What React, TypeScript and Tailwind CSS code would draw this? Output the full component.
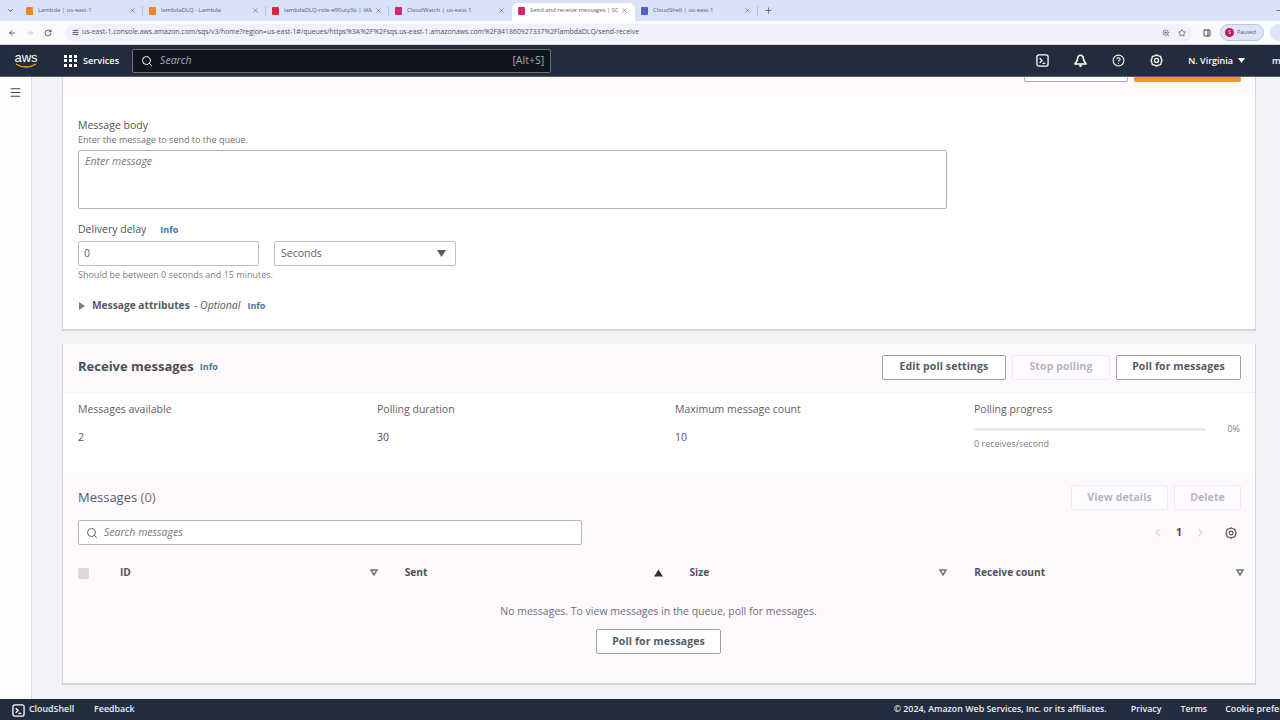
import { ArrowLeft, ArrowRight, RotateCw, Search, Star, ZoomIn, Menu, CircleHelp, ChevronLeft, ChevronRight, X, Plus, ChevronDown, Minus, PanelRight, SlidersHorizontal } from "lucide-react";

const font = "font-['Open_Sans','Liberation_Sans',sans-serif]";

function Tab({ label, color, active, sep = true }: { label: string; color: string; active?: boolean; sep?: boolean }) {
  return (
    <div className={`w-[123px] h-[18px] shrink-0 flex items-center pl-[6px] pb-[3px] rounded-t-[6px] ${active ? "bg-white" : ""}`}>
      <span className="w-[7px] h-[8px] shrink-0 rounded-[1px] mr-[5px]" style={{ backgroundColor: color }} />
      <span className="flex-1 overflow-hidden whitespace-nowrap text-[5.9px] text-[#5b6170]">{label}</span>
      <X className="w-[7px] h-[7px] ml-[3px] text-[#555b68] shrink-0" strokeWidth={2} />
      <span className={`w-[1px] h-[10px] ml-[6px] shrink-0 ${sep ? "bg-[#b9c1d6]" : ""}`} />
    </div>
  );
}

function CloudShellIcon({ size = 14, color = "#ffffff" }: { size?: number; color?: string }) {
  return (
    <svg width={size} height={size} viewBox="0 0 14 14" fill="none" stroke={color} strokeWidth="1.4" className="shrink-0">
      <rect x="1" y="1" width="12" height="12" rx="2" />
      <path d="M4 4.500 6.500 7 4 9.500M7 10h3" />
    </svg>
  );
}

function BellIcon() {
  return (
    <svg width="13" height="14" viewBox="0 0 13 14" fill="none" stroke="#fff" strokeWidth="1.6" className="block">
      <path d="M6.500 1.200c-1.800 0-2.600 1.300-2.800 3L2.900 7 1 10h11L10.100 7l-.8-2.800C9.100 2.500 8.300 1.200 6.500 1.200z" strokeLinejoin="round" />
      <circle cx="6.500" cy="11.800" r="1.300" fill="#fff" stroke="none" />
    </svg>
  );
}

function GearIcon({ color, size = 13 }: { color: string; size?: number }) {
  return (
    <svg width={size} height={size} viewBox="0 0 14 14" fill="none" stroke={color} strokeWidth="1.4" className="block">
      <path d="M7 1 9 2 11.500 2.500 12 5 13 7 12 9 11.500 11.500 9 12 7 13 5 12 2.500 11.500 2 9 1 7 2 5 2.500 2.500 5 2z" strokeLinejoin="round" />
      <circle cx="7" cy="7" r="2.200" />
    </svg>
  );
}

function Btn({ children, disabled, w }: { children: string; disabled?: boolean; w: string }) {
  return (
    <div className={`${w} h-[25px] shrink-0 flex items-center justify-center rounded-[2px] text-[10.5px] font-bold tracking-[0.1px] ${disabled ? "border border-[#eeecf1] text-[#b4b6bc] bg-[#fefcff]" : "border border-[#9ba0a8] text-[#555b66] bg-white"}`}>
      {children}
    </div>
  );
}

function Stat({ label, value, w }: { label: string; value: string; w: string }) {
  return (
    <div className={`${w} flex flex-col`}>
      <span className="text-[10.5px] leading-[14px] text-[#5b6068]">{label}</span>
      <span className="text-[10.5px] leading-[14px] text-[#4e535b] mt-[14px]">{value}</span>
    </div>
  );
}

function Caret({ up }: { up?: boolean }) {
  return up ? (
    <svg width="9" height="8" viewBox="0 0 9 8"><path d="M4.500 0.500 9 7.500H0z" fill="#2f343b" /></svg>
  ) : (
    <svg width="8" height="7" viewBox="0 0 8 7"><path d="M1 1h6L4 6z" fill="none" stroke="#6e737b" strokeWidth="1.5" /></svg>
  );
}

function Th({ label, w, up }: { label: string; w: string; up?: boolean }) {
  return (
    <div className={`${w} flex items-center justify-between`}>
      <span className="text-[10.2px] font-bold text-[#4e535b]">{label}</span>
      <Caret up={up} />
    </div>
  );
}

export default function App() {
  return (
    <div className={`w-[1280px] h-[720px] overflow-hidden flex flex-col bg-[#f3f2f7] ${font}`}>
      {/* tabs */}
      <div className="h-[21px] shrink-0 bg-[#d9e2f6] flex items-end pl-[7px]">
        <ChevronDown className="w-[7px] h-[7px] text-[#444] mb-[7px] mr-[6px]" strokeWidth={3} />
        <Tab label="Lambda | us-east-1" color="#e8862e" />
        <Tab label="lambdaDLQ - Lambda" color="#e8862e" />
        <Tab label="lambdaDLQ-role-e90uty3b | IAM" color="#d5293f" />
        <Tab label="CloudWatch | us-east-1" color="#d6246e" sep={false} />
        <Tab label="Send and receive messages | SQS" color="#d6246e" active sep={false} />
        <Tab label="CloudShell | us-east-1" color="#4f5fc4" />
        <Plus className="w-[9px] h-[9px] text-[#555] mb-[6px] ml-[6px]" strokeWidth={2} />
        <div className="flex-1" />
        <Minus className="w-[9px] h-[9px] text-[#555] mb-[6px] mr-[-4px]" strokeWidth={2} />
      </div>
      {/* toolbar */}
      <div className="h-[24px] shrink-0 bg-[#fafbfe] flex items-center pl-[8px] border-b border-[#cfd2da]">
        <ArrowLeft className="w-[8px] h-[8px] text-[#444] shrink-0" strokeWidth={2.5} />
        <ArrowRight className="w-[8px] h-[8px] text-[#bbb] ml-[10px] shrink-0" strokeWidth={2.5} />
        <RotateCw className="w-[8px] h-[8px] text-[#444] ml-[10px] shrink-0" strokeWidth={2.5} />
        <div className="ml-[13px] w-[1128px] shrink-0 h-[18px] rounded-full bg-[#f0f1fb] flex items-center pl-[7px]">
          <SlidersHorizontal className="w-[7px] h-[7px] text-[#444] mr-[3px]" strokeWidth={2.5} />
          <span className="text-[6.9px] text-[#4c5260] whitespace-nowrap flex-1">us-east-1.console.aws.amazon.com/sqs/v3/home?region=us-east-1#/queues/https%3A%2F%2Fsqs.us-east-1.amazonaws.com%2F841860927337%2FlambdaDLQ/send-receive</span>
          <ZoomIn className="w-[8px] h-[8px] text-[#555] mr-[8px]" strokeWidth={2} />
          <Star className="w-[8px] h-[8px] text-[#444] mr-[7px]" strokeWidth={2} />
        </div>
        <PanelRight className="w-[8px] h-[8px] text-[#222] ml-[10px] shrink-0" strokeWidth={2.5} />
        <div className="ml-[9px] w-[44px] h-[17px] rounded-full bg-[#dfe5f7] border border-[#b9c4e0] flex items-center pl-[4px] gap-[3px] shrink-0">
          <span className="w-[9px] h-[9px] rounded-full bg-[#c2185b] text-[5px] text-white flex items-center justify-center">S</span>
          <span className="text-[5.5px] text-[#50566a]">Paused</span>
        </div>
        <div className="ml-[6px] h-[17px] flex-1 rounded-l-full bg-[#dfe5f7]" />
      </div>
      {/* aws nav */}
      <div className="h-[32px] shrink-0 bg-[#222c3d] flex items-center border-b border-[#5a6069] overflow-hidden">
        <div className="w-[52px] flex flex-col items-center">
          <span className="text-[13px] leading-[11px] text-white font-['Liberation_Sans',sans-serif]">aws</span>
          <svg width="22" height="6" viewBox="0 0 22 6" fill="none"><path d="M1 1c6 4 14 4 20 0" stroke="#f59e0b" strokeWidth="1.4" /></svg>
        </div>
        <div className="grid grid-cols-3 gap-[1.5px] w-[13px] ml-[12px]">
          {Array.from({ length: 9 }).map((_, i) => (
            <span key={i} className="w-[3px] h-[3px] bg-white" />
          ))}
        </div>
        <span className="text-[9.2px] font-semibold text-white ml-[6px]">Services</span>
        <div className="ml-[13px] w-[419px] h-[24px] bg-[#10141c] border border-[#6a7079] rounded-[2px] flex items-center pl-[8px] pr-[6px]">
          <Search className="w-[12px] h-[12px] text-white" strokeWidth={2} />
          <span className="text-[10.5px] italic text-[#a6abb3] ml-[7px] flex-1">Search</span>
          <span className="text-[10.5px] text-[#a6abb3]">[Alt+S]</span>
        </div>
        <div className="flex-1" />
        <CloudShellIcon size={13} />
        <span className="ml-[25px]"><BellIcon /></span>
        <CircleHelp className="w-[13px] h-[13px] text-white ml-[25px]" strokeWidth={2} />
        <span className="ml-[25px]"><GearIcon color="#ffffff" /></span>
        <span className="text-[9px] font-semibold text-white ml-[25px] whitespace-nowrap">N. Virginia</span>
        <svg width="7" height="5" viewBox="0 0 7 5" className="ml-[5px]"><path d="M0 0h7L3.500 5z" fill="#fff" /></svg>
        <span className="text-[9.2px] font-semibold text-white ml-[27px] w-[8px] overflow-hidden">m</span>
      </div>
      {/* body */}
      <div className="flex-1 flex min-h-0">
        <div className="w-[32px] shrink-0 bg-[#fffdff] border-r border-[#dcdce2] pt-[9px] pl-[9px]">
          <Menu className="w-[13px] h-[13px] text-[#3e444c]" strokeWidth={2} />
        </div>
        <div className="w-[1194px] ml-[30px] shrink-0 flex flex-col">
          {/* send card */}
          <div className="h-[254px] shrink-0 bg-white border-b-2 border-x border-[#d5d5da] flex flex-col">
            <div className="h-[19px] shrink-0 bg-[#fdf9fd] flex justify-end items-start gap-[6px] pr-[14px] overflow-hidden">
              <div className="w-[104px] h-[25px] mt-[-20px] shrink-0 bg-white border border-[#a9adb4] rounded-[2px]" />
              <div className="w-[107px] h-[25px] mt-[-20px] shrink-0 bg-[#ef9c1e] rounded-[2px]" />
            </div>
            <div className="pl-[15px] pt-[22px]">
              <div className="text-[10.5px] leading-[14px] text-[#4e535b]">Message body</div>
              <div className="text-[9px] leading-[12px] mt-[2px] text-[#6b7078]">Enter the message to send to the queue.</div>
              <div className="w-[869px] h-[59px] mt-[4px] border border-[#b0b3b9] rounded-[2px] pl-[6px] pt-[3px] text-[10.5px] italic text-[#75797f]">Enter message</div>
              <div className="flex items-center h-[14px] mt-[14px]">
                <span className="text-[10.5px] text-[#4e535b]">Delivery delay</span>
                <span className="text-[9px] font-bold text-[#3f74a8] ml-[14px]">Info</span>
              </div>
              <div className="flex gap-[15px] mt-[4px]">
                <div className="w-[181px] h-[25px] border border-[#bcbfc5] rounded-[2px] flex items-center pl-[5px] text-[10.5px] text-[#5a5f67]">0</div>
                <div className="w-[182px] h-[25px] border border-[#bcbfc5] rounded-[2px] flex items-center justify-between pl-[6px] pr-[9px] text-[10.5px] text-[#5a5f67]">
                  Seconds
                  <svg width="9" height="7" viewBox="0 0 9 7"><path d="M0 0h9L4.500 7z" fill="#545b64" /></svg>
                </div>
              </div>
              <div className="text-[9px] leading-[12px] mt-[3px] text-[#7b8087]">Should be between 0 seconds and 15 minutes.</div>
              <div className="flex items-center h-[14px] mt-[18px]">
                <svg width="7" height="8" viewBox="0 0 7 8"><path d="M1 0l6 4-6 4z" fill="#7a7f87" /></svg>
                <span className="text-[10.2px] font-bold text-[#565b63] ml-[7px]">Message attributes</span>
                <span className="text-[10.5px] text-[#565b63] ml-[4px]">-</span>
                <span className="text-[10.5px] italic text-[#565b63] ml-[3px]">Optional</span>
                <span className="text-[9px] font-bold text-[#3f74a8] ml-[7px]">Info</span>
              </div>
            </div>
          </div>
          {/* receive card */}
          <div className="h-[341px] mt-[13px] shrink-0 bg-white border-b-2 border-x border-[#d5d5da] flex flex-col">
            <div className="h-[49px] shrink-0 bg-[#fdf9fd] border-b border-[#f2eff3] flex items-center pb-[2px] pl-[15px] pr-[14px]">
              <span className="text-[13px] font-bold text-[#4a4f57]">Receive messages</span>
              <span className="text-[9px] font-bold text-[#3f74a8] ml-[6px]">Info</span>
              <div className="flex-1" />
              <Btn w="w-[124px]">Edit poll settings</Btn>
              <div className="w-[6px]" />
              <Btn w="w-[98px]" disabled>Stop polling</Btn>
              <div className="w-[6px]" />
              <Btn w="w-[125px]">Poll for messages</Btn>
            </div>
            <div className="h-[80px] shrink-0 flex pl-[15px] pt-[9px]">
              <Stat w="w-[299px]" label="Messages available" value="2" />
              <Stat w="w-[298px]" label="Polling duration" value="30" />
              <Stat w="w-[299px]" label="Maximum message count" value="10" />
              <div className="flex-1 pr-[15px]">
                <div className="text-[10.5px] leading-[14px] text-[#5b6068]">Polling progress</div>
                <div className="flex items-center mt-[8px] h-[10px]">
                  <div className="w-[232px] h-[3px] rounded-full bg-[#e9e9ec]" />
                  <span className="flex-1 text-right text-[9px] text-[#7b8087]">0%</span>
                </div>
                <div className="text-[9px] leading-[12px] mt-[4px] text-[#7b8087]">0 receives/second</div>
              </div>
            </div>
            <div className="flex-1 bg-[#fdf9fd] flex flex-col">
              <div className="h-[47px] shrink-0 flex items-center pt-[2px] pl-[15px] pr-[14px]">
                <span className="text-[13px] text-[#555a62]">Messages <span className="text-[#6f747b]">(0)</span></span>
                <div className="flex-1" />
                <Btn w="w-[97px]" disabled>View details</Btn>
                <div className="w-[6px]" />
                <Btn w="w-[67px]" disabled>Delete</Btn>
              </div>
              <div className="h-[25px] shrink-0 flex items-center pl-[15px] pr-[18px]">
                <div className="w-[504px] h-[25px] bg-white border border-[#b5b8be] rounded-[2px] flex items-center pl-[7px]">
                  <Search className="w-[12px] h-[12px] text-[#5a5f67]" strokeWidth={2} />
                  <span className="text-[10.5px] italic text-[#75797f] ml-[6px]">Search messages</span>
                </div>
                <div className="flex-1" />
                <ChevronLeft className="w-[13px] h-[13px] text-[#a4a7ad]" strokeWidth={1.5} />
                <span className="text-[10.5px] font-bold text-[#444950] mx-[12px]">1</span>
                <ChevronRight className="w-[13px] h-[13px] text-[#a4a7ad]" strokeWidth={1.5} />
                <span className="ml-[18px]"><GearIcon color="#4e535b" size={12} /></span>
              </div>
              <div className="h-[40px] mt-[8px] shrink-0 flex items-center pl-[15px] pr-[11px]">
                <span className="w-[11px] h-[11px] rounded-[2px] bg-[#d9d9de]" />
                <div className="w-[31px]" />
                <Th w="w-[258px]" label="ID" />
                <div className="w-[27px]" />
                <Th w="w-[258px]" label="Sent" up />
                <div className="w-[27px]" />
                <Th w="w-[258px]" label="Size" />
                <div className="w-[27px]" />
                <Th w="w-[270px]" label="Receive count" />
              </div>
              <div className="flex flex-col items-center pt-[11px] pr-[1px]">
                <span className="text-[10.5px] leading-[14px] text-[#6b7078]">No messages. To view messages in the queue, poll for messages.</span>
                <div className="mt-[11px]"><Btn w="w-[125px]">Poll for messages</Btn></div>
              </div>
            </div>
          </div>
        </div>
      </div>
      {/* footer */}
      <div className="h-[21px] shrink-0 bg-[#222c3d] flex items-center pt-[1px] pl-[12px] text-[8.85px] text-[#eef0f3] font-semibold whitespace-nowrap overflow-hidden">
        <CloudShellIcon size={13} />
        <span className="ml-[4px]">CloudShell</span>
        <span className="ml-[20px]">Feedback</span>
        <span className="ml-[759px]">© 2024, Amazon Web Services, Inc. or its affiliates.</span>
        <span className="ml-[24px]">Privacy</span>
        <span className="ml-[19px]">Terms</span>
        <span className="ml-[18px]">Cookie preferences</span>
      </div>
    </div>
  );
}
